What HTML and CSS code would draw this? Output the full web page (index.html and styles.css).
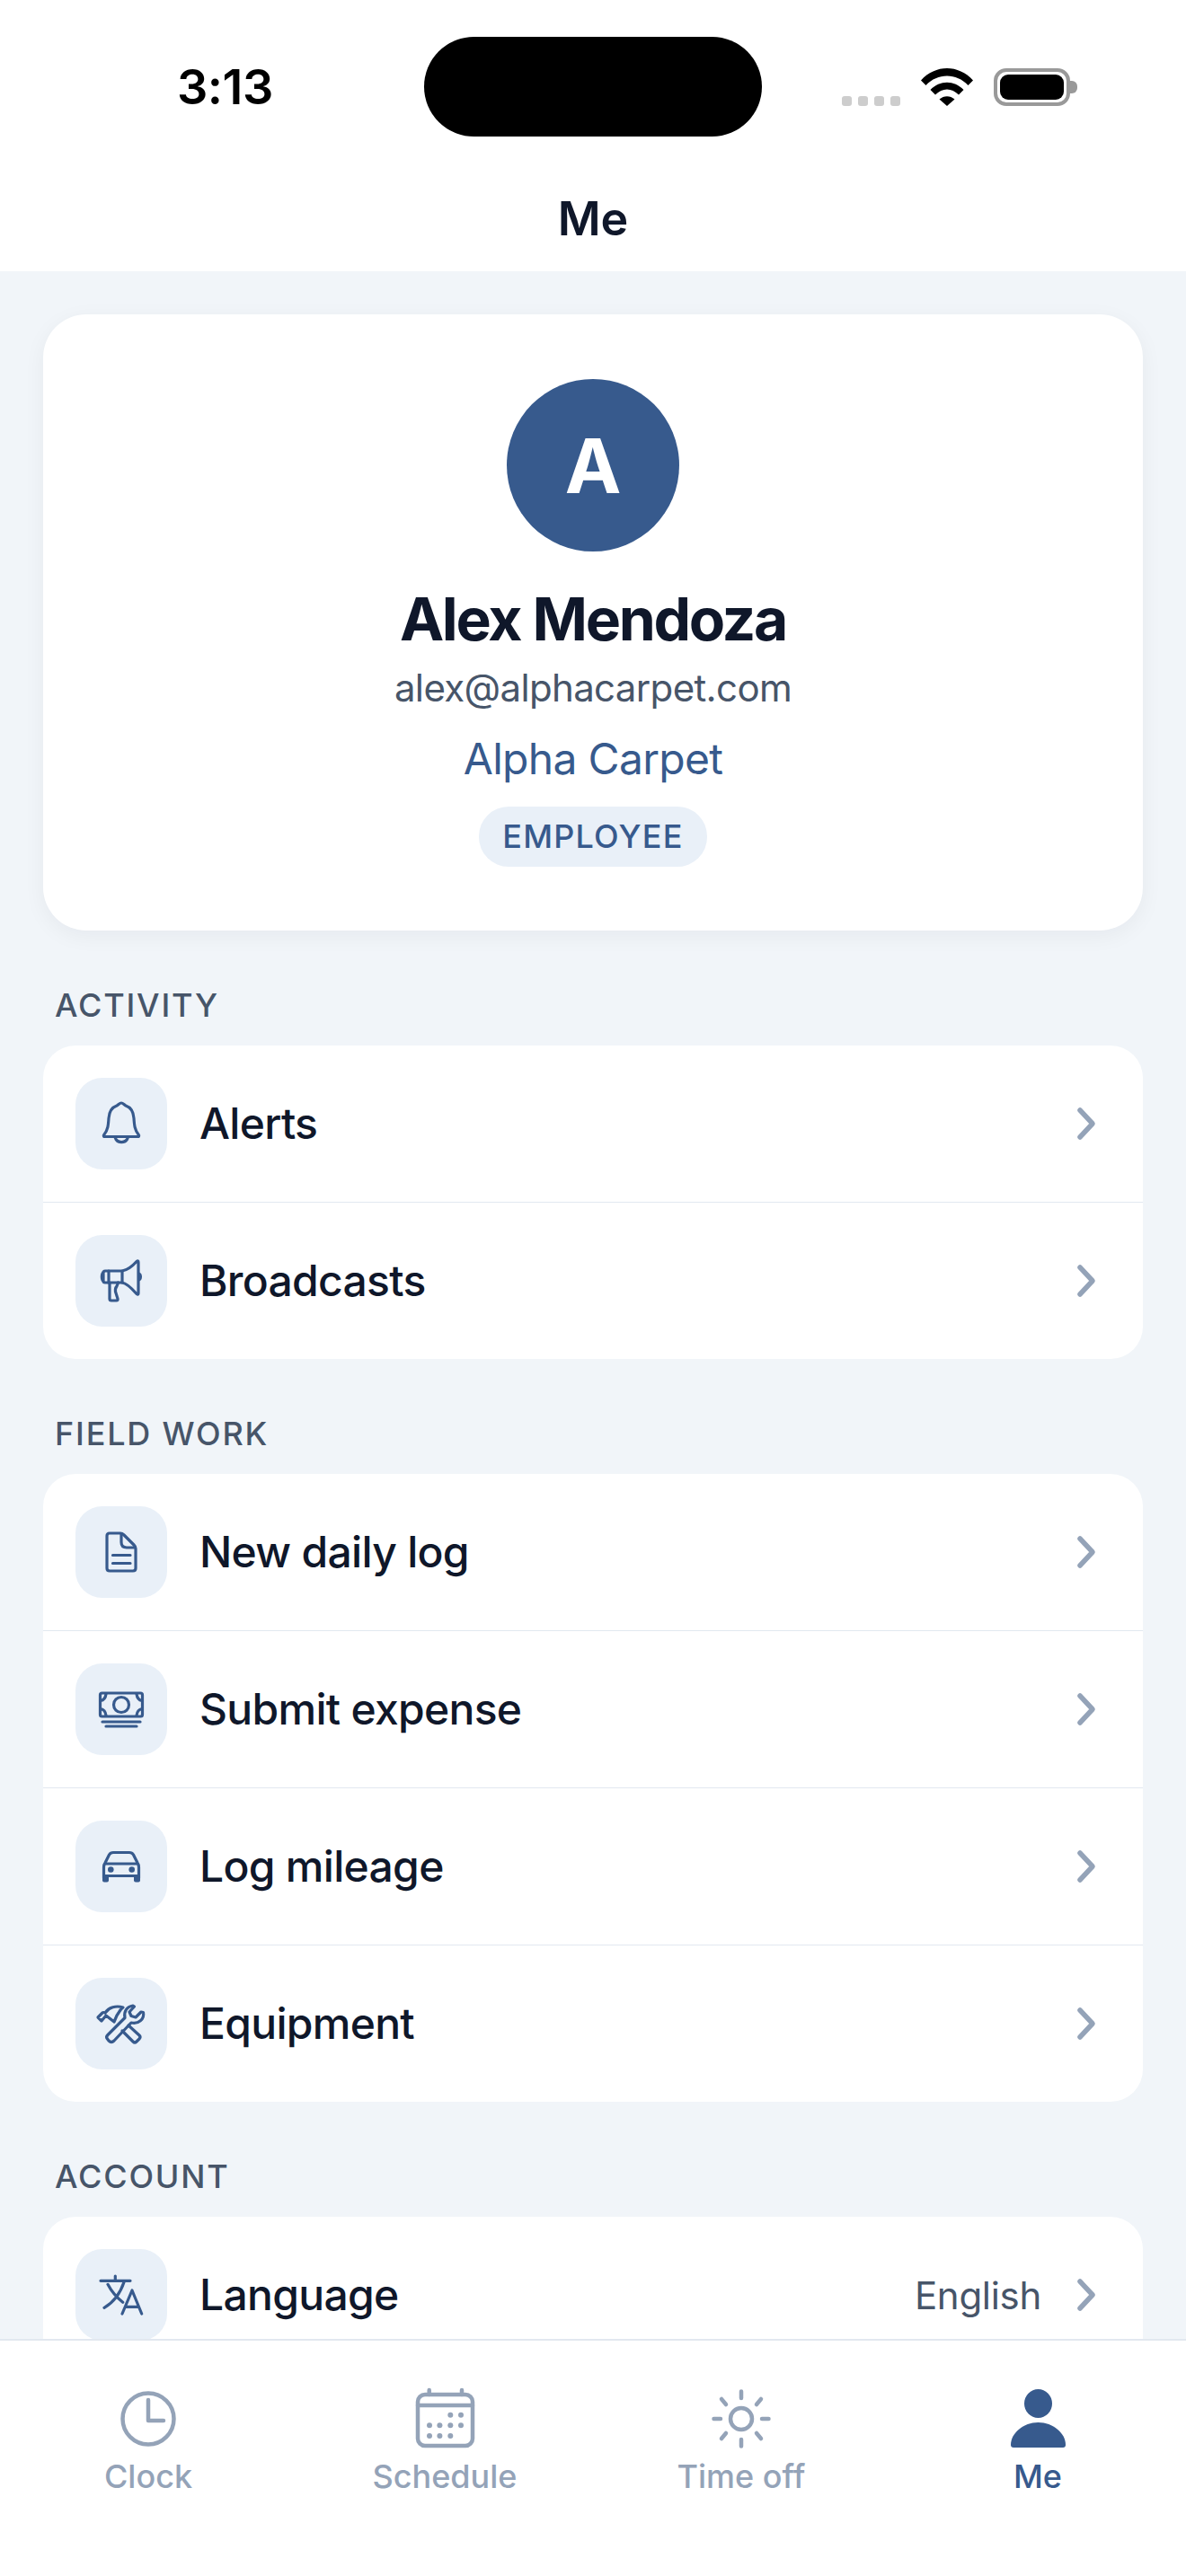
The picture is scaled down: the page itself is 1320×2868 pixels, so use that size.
FILE: index.html
```html
<!DOCTYPE html>
<html>
<head>
    <meta charset="UTF-8">
    <meta name="viewport" content="width=device-width, initial-scale=1.0">
    <title>Me</title>
    <link rel="stylesheet" href="styles.css">
</head>
<body>
    <div class="page">
        <!-- Status bar and title -->
        <header class="top">
            <div class="status">
                <div class="status-time">3:13</div>
                <div class="island"></div>
                <div class="status-icons">
                    <div class="signal"><span></span><span></span><span></span><span></span></div>
                    <svg class="wifi" width="58" height="42" viewBox="0 0 58 42">
                        <path d="M0 13.5C16-4.5 42-4.5 58 13.5L52.5 19C39.5 5 18.5 5 5.5 19Z"/>
                        <path d="M10.5 24C21 13 37 13 47.5 24L42 29.5C34 21.5 24 21.5 16 29.5Z"/>
                        <path d="M20.5 34.5C25.5 30 32.5 30 37.5 34.5L29 42Z"/>
                    </svg>
                    <div class="battery"><div class="battery-fill"></div></div>
                </div>
            </div>
            <h1 class="title">Me</h1>
        </header>

        <main class="content">
            <!-- Profile -->
            <section class="profile">
                <div class="avatar">A</div>
                <div class="profile-name">Alex Mendoza</div>
                <div class="profile-email">alex@alphacarpet.com</div>
                <div class="profile-company">Alpha Carpet</div>
                <div class="role">EMPLOYEE</div>
            </section>

            <!-- Activity -->
            <h2 class="section-label">ACTIVITY</h2>
            <div class="list">
                <div class="row">
                    <div class="row-icon">
                        <svg width="102" height="102" viewBox="0 0 102 102">
                            <path d="M51 28C53 28 54 30 56 31C62 33 64.5 38 65 45C65.5 53 66 58 70 63C71.5 65 70.5 65.5 69 65.5H33C31.5 65.5 30.5 65 32 63C36 58 36.5 53 37 45C37.5 38 40 33 46 31C48 30 49 28 51 28Z"/>
                            <path d="M44 66A7.5 7.5 0 0 0 58.5 66"/>
                        </svg>
                    </div>
                    <div class="row-label">Alerts</div>
                    <svg class="chevron" width="24" height="44" viewBox="0 0 24 44"><path d="M5 7L19 22L5 37"/></svg>
                </div>
                <div class="row">
                    <div class="row-icon">
                        <svg width="102" height="102" viewBox="0 0 102 102">
                            <path d="M52 40C58 39 64 34 68 29.5Q70 28 70 30.5V65Q70 67 68 65.5C64 61 58 54 52 53H33Q31 53 31 51V42Q31 40 33 40Z"/>
                            <path d="M52 40V53M37 40V53"/>
                            <path d="M38 53V71Q38 73 40 73H45.5Q47.5 73 47 71L44.5 63Q44 59 46 57L47.5 53"/>
                            <path class="solid" d="M30 40.5C27 42 27 51 30 52.5ZM71 41.5C75 42.5 75 50.5 71 51.5Z"/>
                        </svg>
                    </div>
                    <div class="row-label">Broadcasts</div>
                    <svg class="chevron" width="24" height="44" viewBox="0 0 24 44"><path d="M5 7L19 22L5 37"/></svg>
                </div>
            </div>

            <!-- Field work -->
            <h2 class="section-label">FIELD WORK</h2>
            <div class="list">
                <div class="row">
                    <div class="row-icon">
                        <svg width="102" height="102" viewBox="0 0 102 102">
                            <path d="M38 30H50Q52 30 54 32L65 43Q67 45 67 47V69Q67 72 64 72H38Q35 72 35 69V33Q35 30 38 30Z"/>
                            <path d="M51 31V40Q51 46 57 46H66"/>
                            <path d="M41.5 54.5H61M41.5 63.5H61"/>
                        </svg>
                    </div>
                    <div class="row-label">New daily log</div>
                    <svg class="chevron" width="24" height="44" viewBox="0 0 24 44"><path d="M5 7L19 22L5 37"/></svg>
                </div>
                <div class="row">
                    <div class="row-icon">
                        <svg width="102" height="102" viewBox="0 0 102 102">
                            <rect x="27.5" y="33" width="47" height="26" rx="2"/>
                            <circle cx="51" cy="46" r="8.5"/>
                            <path d="M28 41.5C31 41 33.5 38 34 34M74 41.5C71 41 68.5 38 68 34M28 50.5C31 51 33.5 54 34 58M74 50.5C71 51 68.5 54 68 58"/>
                            <path d="M30 65H72M34 70H68"/>
                        </svg>
                    </div>
                    <div class="row-label">Submit expense</div>
                    <svg class="chevron" width="24" height="44" viewBox="0 0 24 44"><path d="M5 7L19 22L5 37"/></svg>
                </div>
                <div class="row">
                    <div class="row-icon">
                        <svg width="102" height="102" viewBox="0 0 102 102">
                            <path d="M31.5 64V52Q31.5 49 33 47L37.5 38Q39 35.5 42 35.5H60Q63 35.5 64.5 38L69 47Q70.5 49 70.5 52V64"/>
                            <path d="M33 48H69M31.5 61.5H70.5"/>
                            <circle class="solid" cx="39.3" cy="54.5" r="3.3"/>
                            <circle class="solid" cx="62.7" cy="54.5" r="3.3"/>
                            <rect class="solid" x="30" y="61" width="7" height="7.5" rx="2"/>
                            <rect class="solid" x="65" y="61" width="7" height="7.5" rx="2"/>
                        </svg>
                    </div>
                    <div class="row-label">Log mileage</div>
                    <svg class="chevron" width="24" height="44" viewBox="0 0 24 44"><path d="M5 7L19 22L5 37"/></svg>
                </div>
                <div class="row">
                    <div class="row-icon">
                        <svg width="102" height="102" viewBox="0 0 102 102">
                            <path d="M36 63.5L55 44.5C53.5 38 57 32 64 31L65.5 32L60 38L62 42.5L67 44L73 38L75.5 38.5C77 46 70 52 62 50L43 70Q40 73 37 70L35.5 68Q33.5 66 36 63.5Z"/>
                            <path d="M25 44L30 39Q31 38 33 39C37 33 45 30.5 53 33Q50 35 48 39L46 42L43 49L34 42L29 48Z"/>
                            <path d="M59 53L71 64Q73 66 71 68L68 71Q66 73 64 71L52 59"/>
                        </svg>
                    </div>
                    <div class="row-label">Equipment</div>
                    <svg class="chevron" width="24" height="44" viewBox="0 0 24 44"><path d="M5 7L19 22L5 37"/></svg>
                </div>
            </div>

            <!-- Account -->
            <h2 class="section-label">ACCOUNT</h2>
            <div class="list">
                <div class="row">
                    <div class="row-icon">
                        <svg width="102" height="102" viewBox="0 0 102 102">
                            <path d="M28 35.3H61M44.3 30V35.3"/>
                            <path d="M54.3 36C50 49 43 59 32 65.3M36 39.3C40 47 46 54 52.7 59.3"/>
                            <path d="M52 72L63 46L73.7 72M55.5 64.3H70.5"/>
                        </svg>
                    </div>
                    <div class="row-label">Language</div>
                    <div class="row-value">English</div>
                    <svg class="chevron" width="24" height="44" viewBox="0 0 24 44"><path d="M5 7L19 22L5 37"/></svg>
                </div>
            </div>
        </main>

        <!-- Bottom tabs -->
        <nav class="tabs">
            <div class="tab">
                <svg width="84" height="84" viewBox="0 0 84 84">
                    <circle cx="42" cy="42" r="28.5"/>
                    <path d="M42 21V44H59"/>
                </svg>
                <div class="tab-label">Clock</div>
            </div>
            <div class="tab">
                <svg width="84" height="84" viewBox="0 0 84 84">
                    <rect x="12" y="15" width="61" height="57" rx="8"/>
                    <path d="M12 27H73M24.7 10V15M61 10V15"/>
                    <g class="solid">
                        <circle cx="48.3" cy="37.7" r="3"/><circle cx="60" cy="37.7" r="3"/>
                        <circle cx="25" cy="49.3" r="3"/><circle cx="36.4" cy="49.3" r="3"/><circle cx="48.3" cy="49.3" r="3"/><circle cx="60" cy="49.3" r="3"/>
                        <circle cx="25" cy="61" r="3"/><circle cx="36.4" cy="61" r="3"/><circle cx="48.3" cy="61" r="3"/>
                    </g>
                </svg>
                <div class="tab-label">Schedule</div>
            </div>
            <div class="tab">
                <svg width="84" height="84" viewBox="0 0 84 84">
                    <circle cx="42" cy="42" r="12"/>
                    <path d="M42 11.5V19M42 65V72.5M11.5 42H19M65 42H72.5M20 20L25 26M64 20L59 26M20 64L25 58M64 64L59 58"/>
                </svg>
                <div class="tab-label">Time off</div>
            </div>
            <div class="tab active">
                <svg width="84" height="84" viewBox="0 0 84 84">
                    <ellipse class="solid" cx="42.5" cy="25" rx="15.5" ry="16"/>
                    <path class="solid" d="M42.5 46C59 46 73 58 73 71Q73 74 70 74H15Q12 74 12 71C12 58 26 46 42.5 46Z"/>
                </svg>
                <div class="tab-label">Me</div>
            </div>
        </nav>
    </div>
</body>
</html>
```

FILE: styles.css
```css
body {
    margin: 0;
    font-family: Inter, "Noto Sans", sans-serif;
    background-color: #f1f5f9;
    color: #0f172a;
}
.page {
    display: flex;
    flex-direction: column;
    width: 1320px;
    height: 2868px;
    overflow: hidden;
}

/* Top area */
.top {
    height: 302px;
    background-color: #fff;
    flex-shrink: 0;
}
.status {
    display: grid;
    grid-template-columns: 472px 376px 472px;
    align-items: center;
    padding-top: 41px;
}
.status-time {
    padding-left: 197px;
    font-size: 54px;
    font-weight: 600;
    line-height: 42px;
    color: #000;
    letter-spacing: -0.5px;
}
.island {
    height: 111px;
    border-radius: 56px;
    background-color: #000;
}
.status-icons {
    display: flex;
    align-items: flex-end;
    height: 42px;
    padding-left: 89px;
}
.signal {
    display: flex;
    gap: 7px;
    margin-right: 23px;
}
.signal span {
    width: 11px;
    height: 11px;
    border-radius: 3px;
    background-color: #cdcdcd;
}
.wifi {
    margin-right: 23px;
}
.battery {
    position: relative;
    box-sizing: border-box;
    width: 85px;
    height: 42px;
    padding: 3px;
    border: 4px solid #999;
    border-radius: 14px;
}
.battery::after {
    content: "";
    position: absolute;
    left: 81px;
    top: 10px;
    width: 8px;
    height: 14px;
    border-radius: 0 6px 6px 0;
    background-color: #999;
}
.battery-fill {
    height: 100%;
    border-radius: 9px;
    background-color: #000;
}
.title {
    margin: 60px 0 0;
    font-size: 52px;
    font-weight: 600;
    line-height: 64px;
    text-align: center;
}

/* Scroll content */
.content {
    flex: 1;
    min-height: 0;
    overflow: hidden;
    padding: 48px 48px 0;
}
.profile {
    display: flex;
    flex-direction: column;
    align-items: center;
    padding: 72px 0 71px;
    border-radius: 48px;
    background-color: #fff;
    box-shadow: 0 6px 24px rgba(15, 23, 42, 0.05);
}
.avatar {
    display: flex;
    align-items: center;
    justify-content: center;
    width: 192px;
    height: 192px;
    border-radius: 50%;
    background-color: #375a8d;
    color: #fff;
    font-size: 84px;
    font-weight: 700;
}
.profile-name {
    margin-top: 35px;
    font-size: 66px;
    font-weight: 700;
    letter-spacing: -2.3px;
    line-height: 80px;
}
.profile-email {
    margin-top: 11px;
    font-size: 42px;
    letter-spacing: -0.65px;
    line-height: 52px;
    color: #475569;
}
.profile-company {
    margin-top: 23px;
    font-size: 48px;
    letter-spacing: -0.7px;
    line-height: 60px;
    color: #375a8d;
}
.role {
    margin-top: 23px;
    padding: 0 26px;
    border-radius: 33px;
    background-color: #e9f0f8;
    color: #375a8d;
    font-size: 36px;
    font-weight: 500;
    letter-spacing: 1.2px;
    line-height: 67px;
}

/* Lists */
.section-label {
    margin: 61px 0 23px;
    padding-left: 13px;
    font-size: 36px;
    font-weight: 500;
    letter-spacing: 1.8px;
    line-height: 44px;
    color: #475569;
}
.list {
    border-radius: 36px;
    background-color: #fff;
    overflow: hidden;
}
.row {
    display: flex;
    align-items: center;
    padding: 36px 51px 36px 36px;
    border-top: 1px solid #e2e8f0;
}
.row:first-child {
    border-top: none;
}
.row-icon {
    width: 102px;
    height: 102px;
    margin-right: 36px;
    border-radius: 30px;
    background-color: #e9f0f8;
}
.row-icon svg {
    display: block;
    fill: none;
    stroke: #375a8d;
    stroke-width: 3.2;
    stroke-linecap: round;
    stroke-linejoin: round;
}
.row-icon .solid {
    fill: #375a8d;
    stroke: none;
}
.row-label {
    flex: 1;
    padding-bottom: 2px;
    font-size: 48px;
    font-weight: 500;
    letter-spacing: -0.7px;
}
.row-value {
    margin-right: 38px;
    font-size: 42px;
    letter-spacing: -0.3px;
    color: #475569;
}
.chevron {
    fill: none;
    stroke: #94a3b8;
    stroke-width: 5.5;
    stroke-linecap: round;
    stroke-linejoin: round;
}

/* Bottom tabs */
.tabs {
    display: grid;
    grid-template-columns: repeat(4, 1fr);
    height: 264px;
    box-sizing: border-box;
    padding-top: 45px;
    border-top: 2px solid #e2e8f0;
    background-color: #fff;
    flex-shrink: 0;
}
.tab {
    display: flex;
    flex-direction: column;
    align-items: center;
    color: #94a3b8;
}
.tab svg {
    display: block;
    fill: none;
    stroke: #94a3b8;
    stroke-width: 4.5;
    stroke-linecap: round;
    stroke-linejoin: round;
}
.tab .solid {
    fill: #94a3b8;
    stroke: none;
}
.tab-label {
    font-size: 36px;
    font-weight: 500;
    line-height: 44px;
}
.tab.active {
    color: #375a8d;
}
.tab.active .solid {
    fill: #375a8d;
}
```
